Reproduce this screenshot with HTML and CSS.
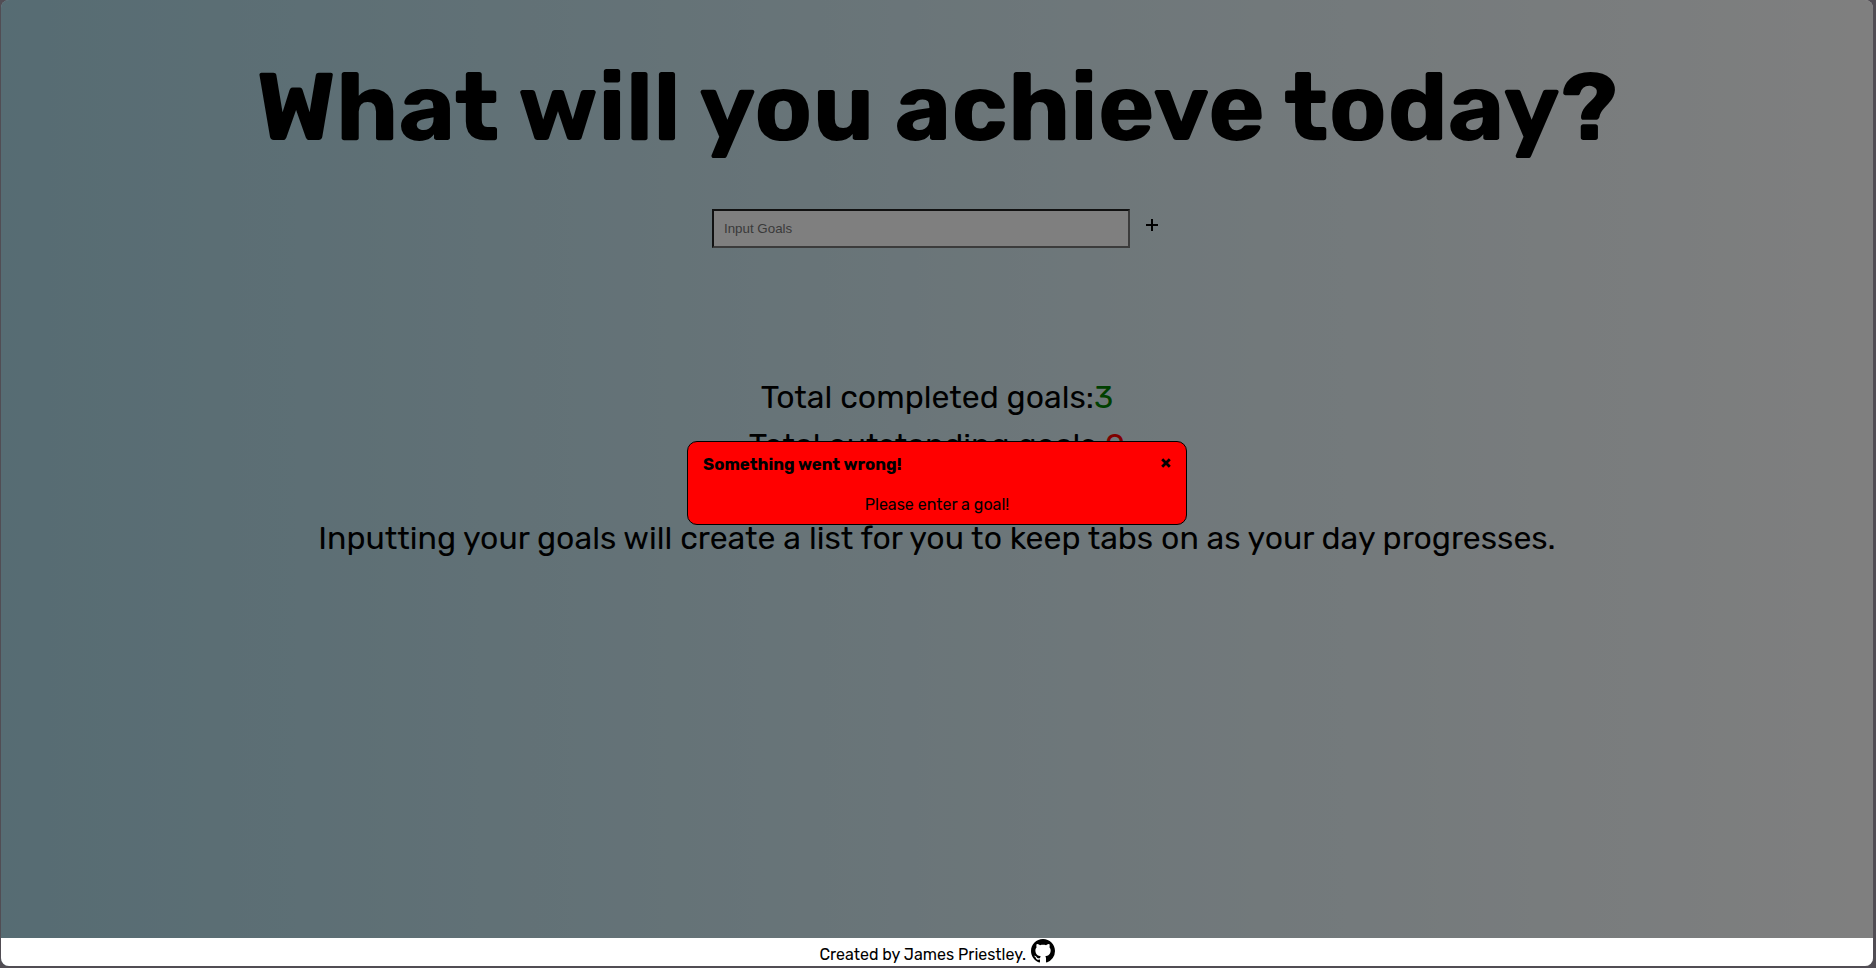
FILE: index.html
```html
<!DOCTYPE html>
<html lang="en">
<head>
  <meta charset="utf-8">
  <title>Daily Goals</title>
  <link rel="stylesheet" href="styles.css">
</head>
<body>
  <div class="page">
    <main class="content">
      <h1 class="heading">What will you achieve today?</h1>
      <form class="goal-form">
        <input class="goal-input" type="text" placeholder="Input Goals">
        <button class="goal-add" type="button" aria-label="Add goal">
          <svg viewBox="0 0 12 12" width="12" height="12"><path d="M6 0v12M0 6h12" stroke="#000" stroke-width="2"/></svg>
        </button>
      </form>
      <div class="totals">
        <p class="total">Total completed goals:<span class="done">3</span></p>
        <p class="total">Total outstanding goals:<span class="open">0</span></p>
      </div>
      <p class="intro">Inputting your goals will create a list for you to keep tabs on as your day progresses.</p>
    </main>
    <footer class="footer">
      <span class="credit">Created by James Priestley.</span>
      <svg class="github" viewBox="0 0 16 16" width="24" height="24"><path d="M8 0C3.58 0 0 3.58 0 8c0 3.54 2.29 6.53 5.47 7.59.4.07.55-.17.55-.38 0-.19-.01-.82-.01-1.49-2.01.37-2.53-.49-2.69-.94-.09-.23-.48-.94-.82-1.13-.28-.15-.68-.52-.01-.53.63-.01 1.08.58 1.23.82.72 1.21 1.87.87 2.33.66.07-.52.28-.87.51-1.07-1.78-.2-3.64-.89-3.64-3.95 0-.87.31-1.59.82-2.15-.08-.2-.36-1.02.08-2.12 0 0 .67-.21 2.2.82.64-.18 1.32-.27 2-.27s1.36.09 2 .27c1.53-1.04 2.2-.82 2.2-.82.44 1.1.16 1.92.08 2.12.51.56.82 1.27.82 2.15 0 3.07-1.87 3.75-3.65 3.95.29.25.54.73.54 1.48 0 1.07-.01 1.93-.01 2.2 0 .21.15.46.55.38A8.01 8.01 0 0 0 16 8c0-4.42-3.58-8-8-8z"/></svg>
    </footer>
    <div class="overlay"></div>
    <section class="modal" role="alertdialog">
      <header class="modal-header">
        <strong class="modal-title">Something went wrong!</strong>
        <svg class="modal-close" viewBox="0 0 10 10" width="10" height="10"><path d="M1.2 1.2l7.6 7.6M8.8 1.2L1.2 8.8" stroke="#000" stroke-width="2.8"/></svg>
      </header>
      <p class="modal-text">Please enter a goal!</p>
    </section>
  </div>
</body>
</html>
```
FILE: styles.css
```css
* {
  box-sizing: border-box;
}

body {
  margin: 0;
  height: 968px;
  padding: 0 3px 2px 1px;
  overflow: hidden;
  background: #514d54;
  color: #000;
  font-family: Rubik, Inter, sans-serif;
}

.page {
  position: relative;
  display: flex;
  flex-direction: column;
  height: 966px;
  overflow: hidden;
  border-radius: 8px;
  background: linear-gradient(to right, lightblue, white);
}

.content {
  flex: 1;
  display: flex;
  flex-direction: column;
  align-items: center;
  padding-top: 50px;
  white-space: nowrap;
}

.heading {
  margin: 0;
  font-size: 96px;
  font-weight: 700;
  line-height: 114px;
}

.goal-form {
  display: flex;
  align-items: flex-start;
  gap: 16px;
  margin-top: 45px;
  padding-right: 5px;
}

.goal-input {
  width: 418px;
  height: 39px;
  padding: 0 10.5px;
  border: 2px solid;
  border-color: #222 #767676 #767676 #222;
  border-radius: 0;
  background: #fff;
  font: 13.333px "Liberation Sans", Arial, sans-serif;
}

.goal-input::placeholder {
  color: #757575;
}

.goal-add {
  display: flex;
  padding: 10px 0 0;
  border: 0;
  background: none;
}

.totals {
  margin-top: 125px;
}

.total {
  margin: 0;
  font-size: 32px;
  line-height: 48px;
  text-align: center;
}

.done {
  color: green;
}

.open {
  color: red;
}

.intro {
  margin: 45px 0 0;
  font-size: 32px;
  line-height: 48px;
}

.footer {
  position: relative;
  z-index: 2;
  display: flex;
  justify-content: center;
  gap: 4.5px;
  height: 28px;
  padding-top: 1px;
  background: #fff;
}

.credit {
  padding-top: 2px;
  font-size: 16px;
  line-height: 28px;
}

.overlay {
  position: absolute;
  inset: 0;
  z-index: 1;
  background: rgba(0, 0, 0, 0.5);
}

.modal {
  position: absolute;
  z-index: 3;
  top: 441px;
  left: 686px;
  width: 500px;
  height: 84px;
  padding: 12px 15px 0;
  border: 1px solid #000;
  border-radius: 10px;
  background: red;
}

.modal-header {
  display: flex;
  justify-content: space-between;
  align-items: flex-start;
}

.modal-title {
  font-size: 16.8px;
  line-height: 20px;
}

.modal-close {
  margin-top: 4px;
}

.modal-text {
  margin: 21px 0 0;
  font-size: 16px;
  line-height: 20px;
  text-align: center;
}
```
